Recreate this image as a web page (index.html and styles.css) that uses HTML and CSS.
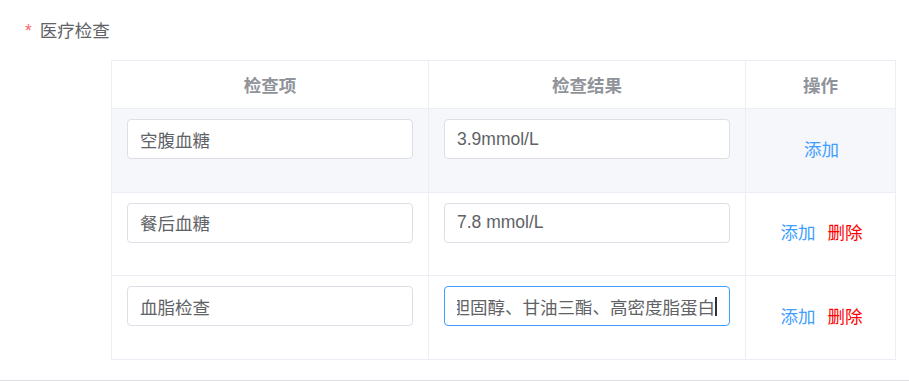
FILE: index.html
```html
<!DOCTYPE html>
<html lang="zh-CN">
    <head>
        <meta charset="UTF-8" />
        <meta name="viewport" content="width=device-width, initial-scale=1.0" />
        <title>医疗检查</title>
        <link rel="stylesheet" href="styles.css">
    </head>
    <body>
        <section class="form-section">
            <div class="form-label">
                <span class="required">*</span>医疗检查
            </div>
            <div class="table-wrap">
                <table class="check-table">
                    <thead>
                        <tr>
                            <th class="col-item">检查项</th>
                            <th class="col-result">检查结果</th>
                            <th class="col-ops">操作</th>
                        </tr>
                    </thead>
                    <tbody>
                        <tr class="row hover">
                            <td><div class="field"><span class="field-text">空腹血糖</span></div></td>
                            <td><div class="field"><span class="field-text">3.9mmol/L</span></div></td>
                            <td class="ops">
                                <button class="link add">添加</button>
                            </td>
                        </tr>
                        <tr class="row">
                            <td><div class="field"><span class="field-text">餐后血糖</span></div></td>
                            <td><div class="field"><span class="field-text">7.8 mmol/L</span></div></td>
                            <td class="ops">
                                <button class="link add">添加</button>
                                <button class="link del">删除</button>
                            </td>
                        </tr>
                        <tr class="row">
                            <td><div class="field"><span class="field-text">血脂检查</span></div></td>
                            <td>
                                <!-- focused, scrolled to the end of its text -->
                                <div class="field focused">
                                    <div class="field-scroll">
                                        <span class="field-text">胆固醇、甘油三酯、高密度脂蛋白</span><span class="caret"></span>
                                    </div>
                                </div>
                            </td>
                            <td class="ops">
                                <button class="link add">添加</button>
                                <button class="link del">删除</button>
                            </td>
                        </tr>
                    </tbody>
                </table>
            </div>
        </section>
        <hr class="divider">
    </body>
</html>
```

FILE: styles.css
```css
* {
    box-sizing: border-box;
    margin: 0;
    padding: 0;
}
body {
    font-family: "Liberation Sans", "Noto Sans CJK SC", sans-serif;
    font-size: 17.5px;
    color: #606266;
    background-color: #fff;
}
.form-section {
    padding: 11px 13px 0 25px;
}
.form-label {
    line-height: 40px;
    color: #606266;
}
.required {
    color: #f56c6c;
    margin-right: 8px;
}
.table-wrap {
    margin: 9px 0 0 86px;
}
.check-table {
    width: 785px;
    border-collapse: collapse;
    table-layout: fixed;
    border: 1px solid #ebeef5;
}
.check-table th,
.check-table td {
    border: 1px solid #ebeef5;
}
.col-item,
.col-result {
    width: 317px;
}
.check-table th {
    height: 48px;
    color: #909399;
    font-weight: bold;
    text-align: center;
    vertical-align: middle;
}
.check-table td {
    padding: 10px 15px 32.67px 15px;
    vertical-align: top;
}
.row.hover td {
    background-color: #f5f7fa;
}
.field {
    display: flex;
    align-items: center;
    height: 40px;
    padding: 0 12px;
    border: 1px solid #dcdfe6;
    border-radius: 4px;
    background-color: #fff;
    color: #606266;
    white-space: nowrap;
    overflow: hidden;
}
.field.focused {
    border-color: #409eff;
}
.field-scroll {
    display: flex;
    align-items: center;
    justify-content: flex-end;
    width: 100%;
    overflow: hidden;
}
.field-text {
    flex-shrink: 0;
}
.caret {
    flex-shrink: 0;
    width: 2px;
    height: 19px;
    background-color: #303133;
}
.check-table td.ops {
    padding: 0 0 0 2px;
    text-align: center;
    vertical-align: middle;
}
.link {
    border: none;
    background: none;
    padding: 0;
    font-family: inherit;
    font-size: 17.5px;
    line-height: 1;
    cursor: pointer;
}
.link + .link {
    margin-left: 7px;
}
.link.add {
    color: #409eff;
}
.link.del {
    color: #ff0000;
}
.divider {
    border: none;
    border-top: 1px solid #dcdfe6;
    margin-top: 20px;
}
```
